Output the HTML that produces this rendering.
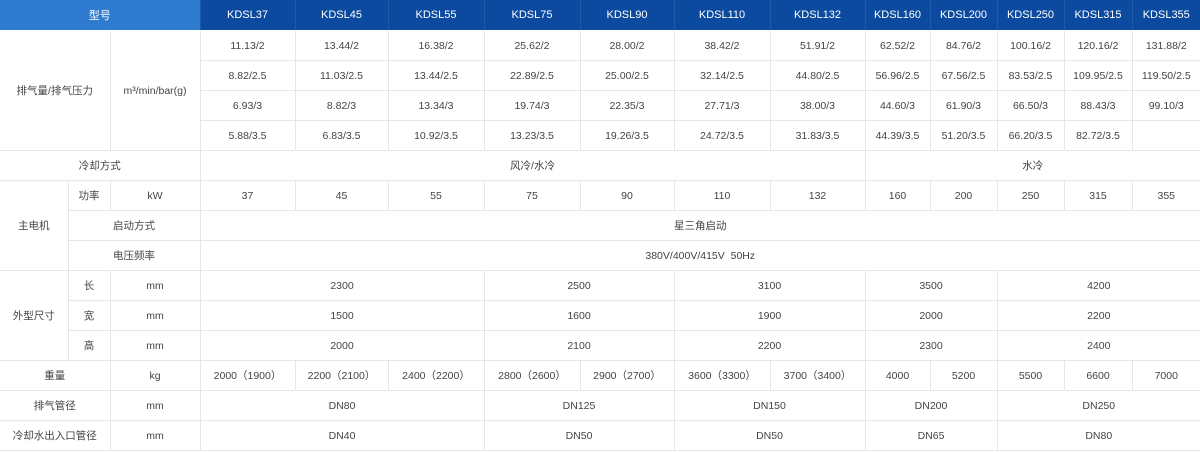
<!DOCTYPE html>
<html><head><meta charset="utf-8"><style>
html,body{margin:0;padding:0;background:#fff;}
table{border-collapse:collapse;table-layout:fixed;width:1200px;font-family:"Liberation Sans","Noto Sans CJK SC",sans-serif;font-size:10.5px;color:#444;}
td,th{border:1px solid #e6e6e6;text-align:center;padding:0;height:29px;white-space:nowrap;overflow:hidden;}
th{height:30px;color:#fff;font-weight:normal;font-size:11px;background:#0b4a9f;border-color:#fff #1e5bab;}
th.f{background:#2e7bcf;}
tr:first-child th{border-top:none;}
td:first-child,th:first-child{border-left:none;}
tr td:last-child,tr th:last-child{border-right:none;}
</style></head><body>
<table>
<colgroup><col style="width:68px"><col style="width:42px"><col style="width:90px">
<col style="width:95px"><col style="width:93px"><col style="width:96px"><col style="width:96px"><col style="width:94px"><col style="width:96px"><col style="width:95px"><col style="width:65px"><col style="width:67px"><col style="width:67px"><col style="width:68px"><col style="width:68px"></colgroup>
<tr><th class="f" colspan="3">型号</th><th>KDSL37</th><th>KDSL45</th><th>KDSL55</th><th>KDSL75</th><th>KDSL90</th><th>KDSL110</th><th>KDSL132</th><th>KDSL160</th><th>KDSL200</th><th>KDSL250</th><th>KDSL315</th><th>KDSL355</th></tr>
<tr><td colspan="2" rowspan="4">排气量/排气压力</td><td rowspan="4">m³/min/bar(g)</td><td>11.13/2</td><td>13.44/2</td><td>16.38/2</td><td>25.62/2</td><td>28.00/2</td><td>38.42/2</td><td>51.91/2</td><td>62.52/2</td><td>84.76/2</td><td>100.16/2</td><td>120.16/2</td><td>131.88/2</td></tr>
<tr><td>8.82/2.5</td><td>11.03/2.5</td><td>13.44/2.5</td><td>22.89/2.5</td><td>25.00/2.5</td><td>32.14/2.5</td><td>44.80/2.5</td><td>56.96/2.5</td><td>67.56/2.5</td><td>83.53/2.5</td><td>109.95/2.5</td><td>119.50/2.5</td></tr>
<tr><td>6.93/3</td><td>8.82/3</td><td>13.34/3</td><td>19.74/3</td><td>22.35/3</td><td>27.71/3</td><td>38.00/3</td><td>44.60/3</td><td>61.90/3</td><td>66.50/3</td><td>88.43/3</td><td>99.10/3</td></tr>
<tr><td>5.88/3.5</td><td>6.83/3.5</td><td>10.92/3.5</td><td>13.23/3.5</td><td>19.26/3.5</td><td>24.72/3.5</td><td>31.83/3.5</td><td>44.39/3.5</td><td>51.20/3.5</td><td>66.20/3.5</td><td>82.72/3.5</td><td></td></tr>
<tr><td colspan="3">冷却方式</td><td colspan="7">风冷/水冷</td><td colspan="5">水冷</td></tr>
<tr><td rowspan="3">主电机</td><td>功率</td><td>kW</td><td>37</td><td>45</td><td>55</td><td>75</td><td>90</td><td>110</td><td>132</td><td>160</td><td>200</td><td>250</td><td>315</td><td>355</td></tr>
<tr><td colspan="2">启动方式</td><td colspan="12">星三角启动</td></tr>
<tr><td colspan="2">电压频率</td><td colspan="12">380V/400V/415V&nbsp;&nbsp;50Hz</td></tr>
<tr><td rowspan="3">外型尺寸</td><td>长</td><td>mm</td><td colspan="3">2300</td><td colspan="2">2500</td><td colspan="2">3100</td><td colspan="2">3500</td><td colspan="3">4200</td></tr>
<tr><td>宽</td><td>mm</td><td colspan="3">1500</td><td colspan="2">1600</td><td colspan="2">1900</td><td colspan="2">2000</td><td colspan="3">2200</td></tr>
<tr><td>高</td><td>mm</td><td colspan="3">2000</td><td colspan="2">2100</td><td colspan="2">2200</td><td colspan="2">2300</td><td colspan="3">2400</td></tr>
<tr><td colspan="2">重量</td><td>kg</td><td>2000（1900）</td><td>2200（2100）</td><td>2400（2200）</td><td>2800（2600）</td><td>2900（2700）</td><td>3600（3300）</td><td>3700（3400）</td><td>4000</td><td>5200</td><td>5500</td><td>6600</td><td>7000</td></tr>
<tr><td colspan="2">排气管径</td><td>mm</td><td colspan="3">DN80</td><td colspan="2">DN125</td><td colspan="2">DN150</td><td colspan="2">DN200</td><td colspan="3">DN250</td></tr>
<tr><td colspan="2">冷却水出入口管径</td><td>mm</td><td colspan="3">DN40</td><td colspan="2">DN50</td><td colspan="2">DN50</td><td colspan="2">DN65</td><td colspan="3">DN80</td></tr>
</table>
</body></html>
